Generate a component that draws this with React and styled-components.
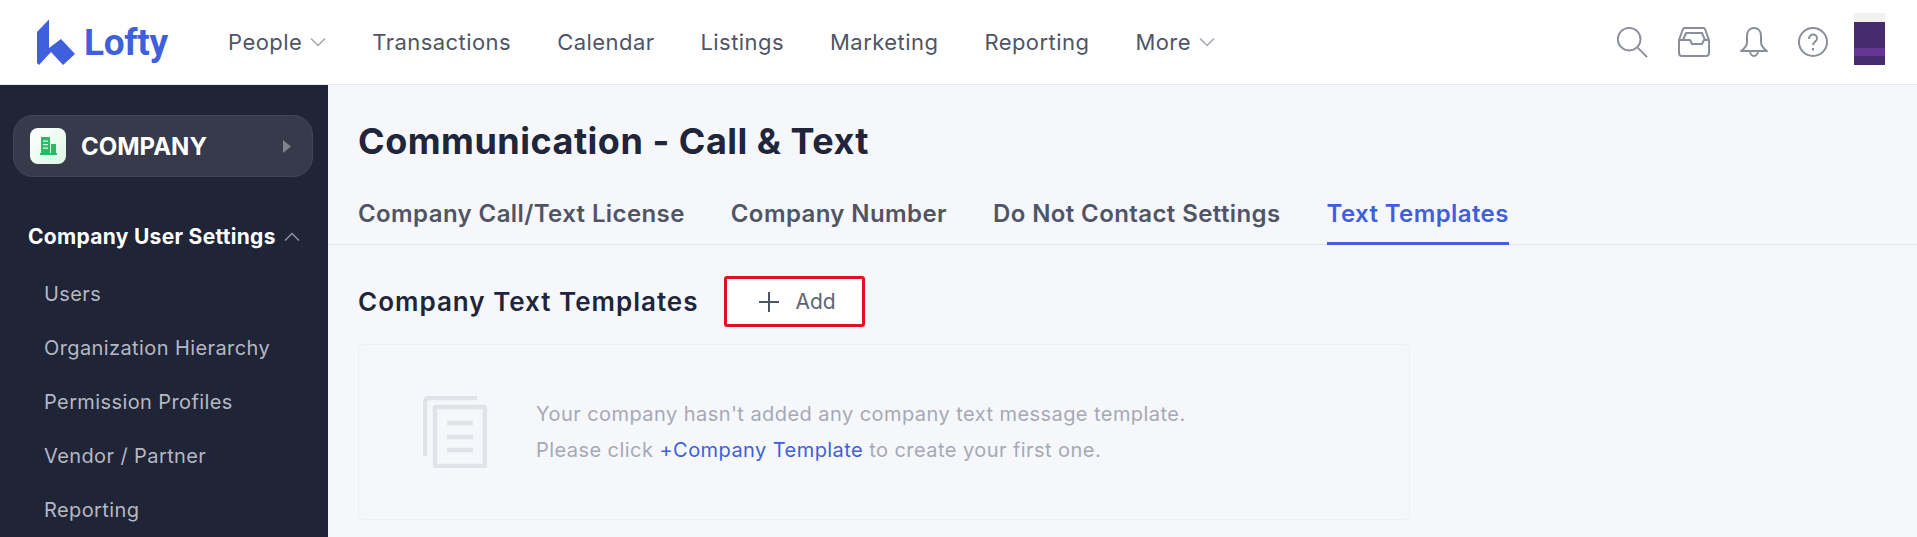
import styled, { createGlobalStyle } from "styled-components";

const GlobalStyle = createGlobalStyle`
  html, body {
    margin: 0;
    height: 100%;
    overflow: hidden;
    background: #f6f7fb;
    font-family: Inter, "Liberation Sans", sans-serif;
  }
  * { box-sizing: border-box; }
`;

const Page = styled.div`
  height: 100vh;
  display: flex;
  flex-direction: column;
`;

const Header = styled.header`
  height: 85px;
  flex: none;
  background: #fff;
  border-bottom: 1px solid #e6e8ed;
  display: flex;
  align-items: center;
  padding: 0 32px 0 37px;
`;

const Brand = styled.div`
  width: 191px;
  display: flex;
  align-items: center;
  gap: 9px;
  color: #3f5fdc;
`;

const BrandName = styled.span`
  font-family: Roboto, sans-serif;
  font-size: 37px;
  font-weight: 700;
  line-height: 1;
  letter-spacing: -0.3px;
`;

const Nav = styled.nav`
  display: flex;
  align-items: center;
  gap: 46px;
`;

const NavItem = styled.a`
  display: flex;
  align-items: center;
  gap: 8px;
  color: #505566;
  font-size: 22px;
  letter-spacing: 0.45px;
`;

const Tools = styled.div`
  margin-left: auto;
  display: flex;
  align-items: center;
  gap: 26px;
`;

const ToolIcons = styled.div`
  display: flex;
  align-items: center;
  gap: 30px;
`;

const Avatar = styled.div`
  width: 31px;
  height: 52px;
  margin-bottom: 6px;
  background: linear-gradient(
    #f1f1f1 0 9px,
    #472b6f 9px 35px,
    #643592 35px 43px,
    #472b6f 43px
  );
`;

const Body = styled.div`
  flex: 1;
  min-height: 0;
  display: flex;
`;

const Sidebar = styled.aside`
  width: 328px;
  flex: none;
  background: #1f2437;
  padding: 30px 15px 0 13px;
  overflow: hidden;
`;

const Switcher = styled.div`
  height: 62px;
  display: flex;
  align-items: center;
  padding: 0 21px 0 16px;
  gap: 15px;
  border-radius: 20px;
  background: #373a4b;
  border: 1px solid #42465a;
`;

const SwitcherIcon = styled.div`
  width: 36px;
  height: 36px;
  border-radius: 8px;
  background: linear-gradient(135deg, #fff, #dcf8e4);
  display: flex;
  align-items: center;
  justify-content: center;
`;

const SwitcherName = styled.span`
  flex: 1;
  color: #fff;
  font-size: 24px;
  font-weight: 700;
`;

const Group = styled.div`
  margin-top: 44px;
  padding-left: 15px;
  display: flex;
  align-items: center;
  gap: 8px;
  color: #fff;
  font-size: 21px;
  font-weight: 700;
  line-height: 32px;
  letter-spacing: 0.3px;
`;

const MenuList = styled.ul`
  list-style: none;
  margin: 14px 0 0;
  padding: 0 0 0 31px;
`;

const MenuItem = styled.li`
  height: 54px;
  display: flex;
  align-items: center;
  color: #b5b8c3;
  font-size: 20px;
  letter-spacing: 0.4px;
`;

const Main = styled.main`
  flex: 1;
  min-width: 0;
  padding-top: 33px;
`;

const Title = styled.h1`
  margin: 0 0 0 30px;
  color: #20253a;
  font-size: 36px;
  font-weight: 700;
  line-height: 46px;
  letter-spacing: 0.5px;
`;

const Tabs = styled.div`
  margin-top: 31px;
  height: 50px;
  padding-left: 30px;
  display: flex;
  gap: 46px;
  border-bottom: 1px solid #e3e5ea;
`;

const Tab = styled.a`
  height: 50px;
  color: ${({ $active }) => ($active ? "#3f5fdc" : "#505566")};
  border-bottom: 3px solid ${({ $active }) => ($active ? "#3f5fdc" : "transparent")};
  font-size: 24px;
  font-weight: 600;
  line-height: 38px;
  letter-spacing: 0.4px;
`;

const SectionRow = styled.div`
  margin: 31px 0 0 30px;
  display: flex;
  align-items: center;
  gap: 25px;
`;

const SectionTitle = styled.h2`
  margin: 0;
  color: #20253a;
  font-size: 26px;
  font-weight: 600;
  letter-spacing: 1px;
`;

const AddButton = styled.button`
  width: 141px;
  height: 51px;
  padding: 0 0 0 6px;
  background: #fff;
  border: 3px solid #e6101c;
  border-radius: 3px;
  display: flex;
  align-items: center;
  justify-content: center;
  gap: 15px;
  color: #606472;
  font-family: inherit;
  font-size: 21px;
`;

const EmptyCard = styled.section`
  width: 1052px;
  height: 176px;
  margin: 17px 0 0 30px;
  border: 1px solid #eceef3;
  border-radius: 6px;
  display: flex;
  align-items: center;
  padding-left: 64px;
  gap: 49px;
`;

const EmptyText = styled.div`
  color: #a6a9b5;
  font-size: 20px;
  line-height: 36px;
  letter-spacing: 0.44px;
`;

const EmptyLink = styled.a`
  color: #3f5fdc;
`;

const Chevron = ({ up, color = "#a4a7b1" }) => (
  <svg width="16" height="16" viewBox="1 1 16 16" fill="none" stroke={color} strokeWidth="1.5">
    <path d={up ? "M2 12.5 9 5.5l7 7" : "M2 5.5 9 12.5l7-7"} />
  </svg>
);

const LogoMark = () => (
  <svg width="38" height="46" viewBox="0 0 38 46" fill="#3f5fdc">
    <path d="M0 13 12 .5V29l12-9 14 15-12 11-12-13-12 13-2-2z" />
  </svg>
);

const SearchIcon = () => (
  <svg width="32" height="32" viewBox="0 0 34 34" fill="none" stroke="#8a8e98" strokeWidth="2">
    <circle cx="14" cy="14" r="12" />
    <path d="m23 23 10 10" />
  </svg>
);

const InboxIcon = () => (
  <svg width="32" height="30" viewBox="0 0 32 30" fill="none" stroke="#8a8e98" strokeWidth="2" strokeLinejoin="round">
    <path d="M1 13 5 2a2 2 0 0 1 2-1h18a2 2 0 0 1 2 1l4 11v13a3 3 0 0 1-3 3H4a3 3 0 0 1-3-3z" />
    <path d="M1 13h11l2 4h10l2-4h5" />
    <path d="M5 13l3-7h16l3 7" />
  </svg>
);

const BellIcon = () => (
  <svg width="28" height="30" viewBox="0 0 28 30" fill="none" stroke="#8a8e98" strokeWidth="2" strokeLinejoin="round">
    <path d="M14 1c-5 0-7 4-7 8v6c0 4-3 7-6 9h26c-3-2-6-5-6-9V9c0-4-2-8-7-8z" />
    <path d="M10 24c0 3 2 5 4 5s4-2 4-5" />
  </svg>
);

const HelpIcon = () => (
  <svg width="30" height="30" viewBox="0 0 30 30" fill="none" stroke="#8a8e98" strokeWidth="2">
    <circle cx="15" cy="15" r="14" />
    <path d="M11 12c0-3 2-4.500 4-4.500s4 1.500 4 4c0 3-4 3.500-4 6.500" />
    <path d="M15 21v2.500" />
  </svg>
);

const BuildingIcon = () => (
  <svg width="17" height="18" viewBox="0 0 17 18" fill="#27bd66">
    <path d="M1 0h9v16H1zM11 7h5v9h-5zM0 16h17v2H0z" />
    <path d="M3 3.500h5v1.300H3zM3 7h5v1.300H3zM3 10.500h5v1.300H3z" fill="#dff8e8" />
  </svg>
);

const Caret = () => (
  <svg width="8" height="13" viewBox="0 0 8 13" fill="#7f8290">
    <path d="M0 0l8 6.500L0 13z" />
  </svg>
);

const PlusIcon = () => (
  <svg width="22" height="22" viewBox="0 0 22 22" stroke="#505566" strokeWidth="2">
    <path d="M11 1v20M1 11h20" />
  </svg>
);

const DocsIcon = () => (
  <svg width="64" height="72" viewBox="0 0 64 72" fill="none" stroke="#e1e3e8" strokeWidth="4.5">
    <path d="M54 2H6a4 4 0 0 0-4 4v54" />
    <rect x="12" y="11" width="50" height="59" rx="1" fill="#f6f7fb" />
    <path d="M24 27h26M24 41h26M24 54h26" />
  </svg>
);

const navItems = [
  { label: "People", menu: true },
  { label: "Transactions" },
  { label: "Calendar" },
  { label: "Listings" },
  { label: "Marketing" },
  { label: "Reporting" },
  { label: "More", menu: true },
];

const tabs = ["Company Call/Text License", "Company Number", "Do Not Contact Settings", "Text Templates"];

const menu = ["Users", "Organization Hierarchy", "Permission Profiles", "Vendor / Partner", "Reporting"];

export default function App() {
  return (
    <Page>
      <GlobalStyle />
      <Header>
        <Brand>
          <LogoMark />
          <BrandName>Lofty</BrandName>
        </Brand>
        <Nav>
          {navItems.map((item) => (
            <NavItem key={item.label}>
              {item.label}
              {item.menu && <Chevron />}
            </NavItem>
          ))}
        </Nav>
        <Tools>
          <ToolIcons>
            <SearchIcon />
            <InboxIcon />
            <BellIcon />
            <HelpIcon />
          </ToolIcons>
          <Avatar />
        </Tools>
      </Header>
      <Body>
        <Sidebar>
          <Switcher>
            <SwitcherIcon>
              <BuildingIcon />
            </SwitcherIcon>
            <SwitcherName>COMPANY</SwitcherName>
            <Caret />
          </Switcher>
          <Group>
            Company User Settings
            <Chevron up color="#8f92a0" />
          </Group>
          <MenuList>
            {menu.map((item) => (
              <MenuItem key={item}>{item}</MenuItem>
            ))}
          </MenuList>
        </Sidebar>
        <Main>
          <Title>Communication - Call &amp; Text</Title>
          <Tabs>
            {tabs.map((tab) => (
              <Tab key={tab} $active={tab === "Text Templates"}>
                {tab}
              </Tab>
            ))}
          </Tabs>
          <SectionRow>
            <SectionTitle>Company Text Templates</SectionTitle>
            <AddButton>
              <PlusIcon />
              Add
            </AddButton>
          </SectionRow>
          <EmptyCard>
            <DocsIcon />
            <EmptyText>
              Your company hasn't added any company text message template.
              <br />
              Please click <EmptyLink>+Company Template</EmptyLink> to create your first one.
            </EmptyText>
          </EmptyCard>
        </Main>
      </Body>
    </Page>
  );
}
